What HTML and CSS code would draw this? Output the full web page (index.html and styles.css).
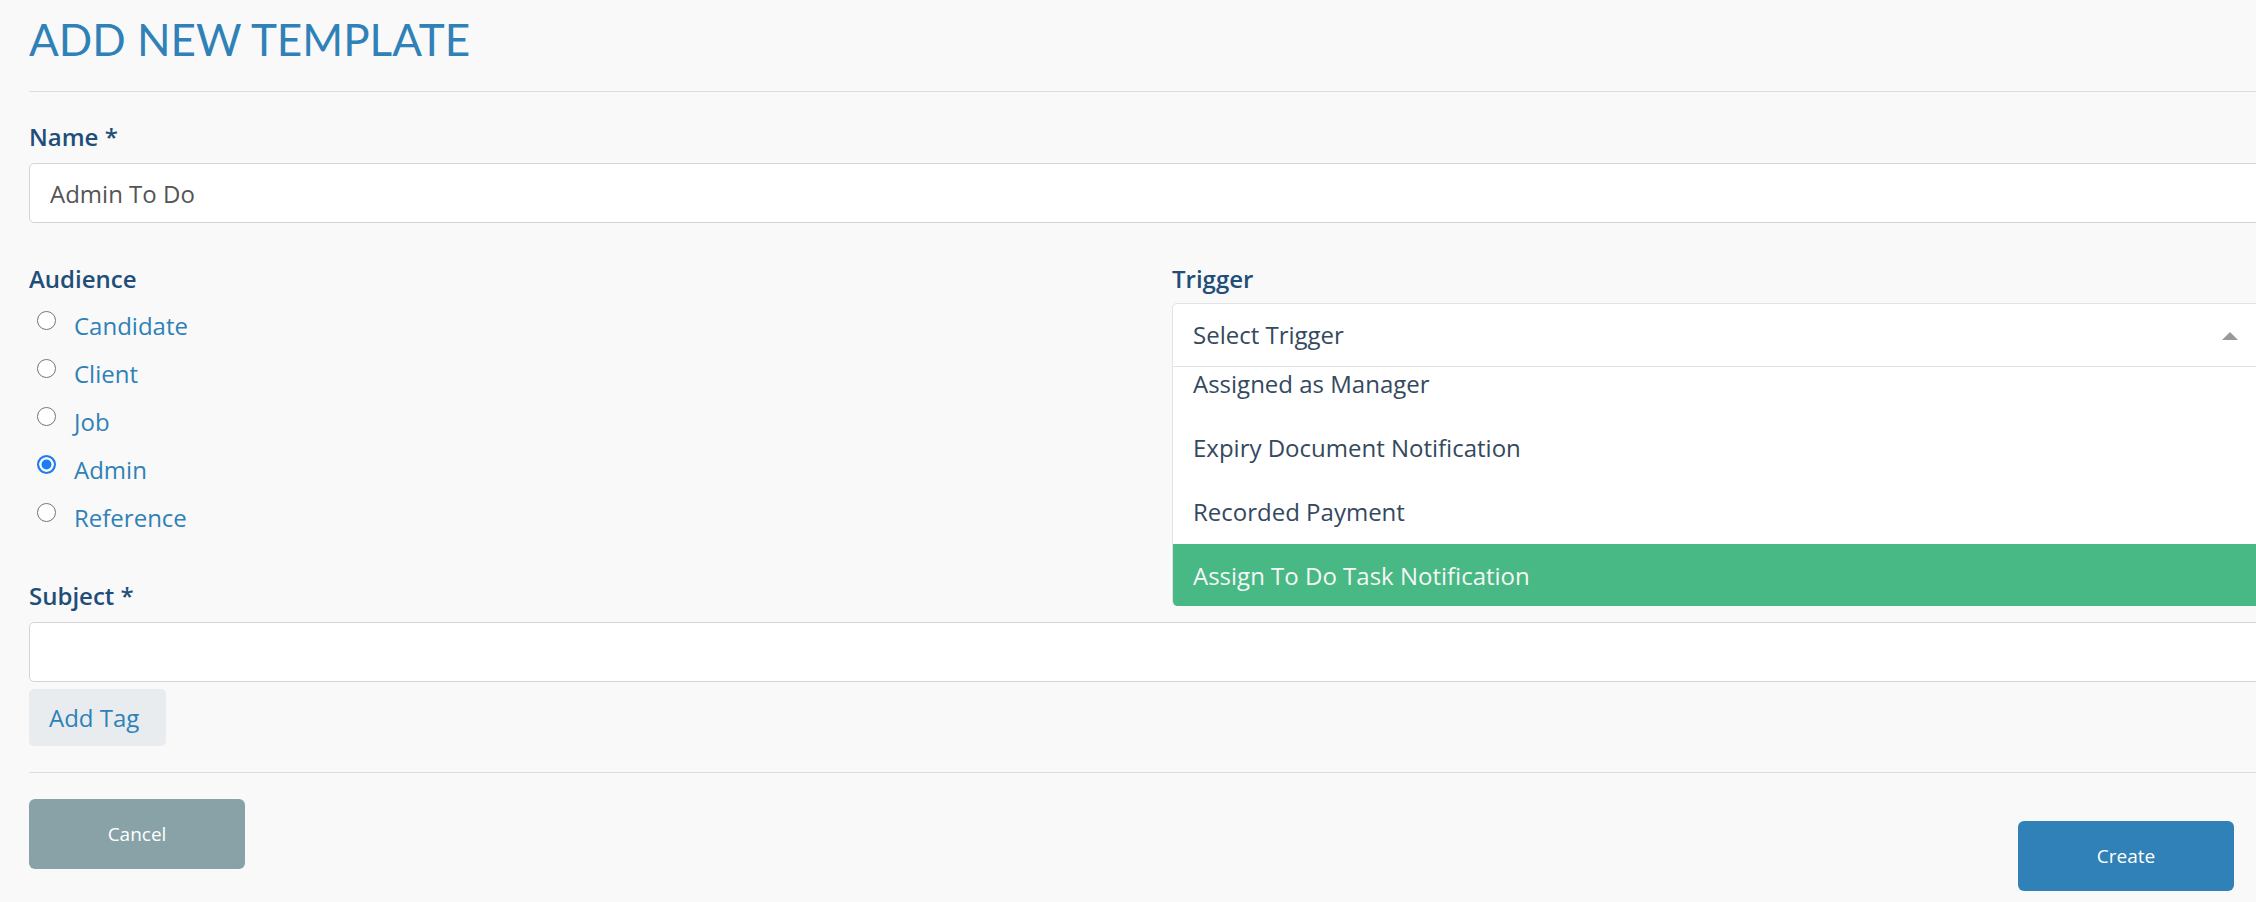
FILE: index.html
```html
<!DOCTYPE html>
<html lang="en">
<head>
  <meta charset="UTF-8" />
  <meta name="viewport" content="width=device-width, initial-scale=1.0"/>
  <title>Add New Template</title>
  <link rel="stylesheet" href="styles.css">
</head>

<body>
  <div class="page">
    <h1 class="page-title">ADD NEW TEMPLATE</h1>
    <div class="divider divider-top"></div>

    <div class="field">
      <label class="field-label" for="name">Name *</label>
      <input class="text-input" id="name" type="text" value="Admin To Do">
    </div>

    <div class="form-row">
      <div class="form-col">
        <div class="field-label">Audience</div>
        <div class="radio-list">
          <label class="radio-item"><input type="radio" name="audience"><span>Candidate</span></label>
          <label class="radio-item"><input type="radio" name="audience"><span>Client</span></label>
          <label class="radio-item"><input type="radio" name="audience"><span>Job</span></label>
          <label class="radio-item"><input type="radio" name="audience" checked><span>Admin</span></label>
          <label class="radio-item"><input type="radio" name="audience"><span>Reference</span></label>
        </div>
      </div>
      <div class="form-col">
        <div class="field-label">Trigger</div>
        <div class="select open">
          <div class="select-head">
            <span>Select Trigger</span>
            <span class="select-arrow"></span>
          </div>
          <div class="select-menu">
            <ul class="select-options">
              <li>Assigned as Manager</li>
              <li>Expiry Document Notification</li>
              <li>Recorded Payment</li>
              <li class="active">Assign To Do Task Notification</li>
            </ul>
          </div>
        </div>
      </div>
    </div>

    <div class="field field-subject">
      <label class="field-label" for="subject">Subject *</label>
      <input class="text-input" id="subject" type="text">
      <button class="btn-tag" type="button">Add Tag</button>
    </div>

    <div class="divider divider-bottom"></div>

    <div class="form-footer">
      <button class="btn btn-cancel" type="button">Cancel</button>
      <button class="btn btn-create" type="button">Create</button>
    </div>
  </div>
</body>
</html>
```

FILE: styles.css
```css
:root {
  --page-background: #f9f9f9;
  --primary: #2f81b7;
  --label-color: #1f4e79;
  --text-color: #34495e;
  --input-border: #d4d4d9;
  --menu-border: #e3e3e3;
  --active-option: #48b884;
  --radio-checked: #1b7cf3;
}
html,
body {
  overflow: hidden;
}
body {
  margin: 0;
  background-color: var(--page-background);
  font-family: "Open Sans", "Noto Sans", "Liberation Sans", sans-serif;
  color: var(--text-color);
}
.page {
  width: 2256px;
  padding-left: 29px;
}
.page-title {
  margin: 13px 0 0;
  font-family: Lato, "Open Sans", sans-serif;
  font-size: 44px;
  line-height: 1.2;
  font-weight: 400;
  color: var(--primary);
}
.divider {
  border-top: 1px solid #dcdcdc;
}
.divider-top {
  margin-top: 25px;
}
.field {
  margin-top: 32px;
}
.field-label {
  display: block;
  font-size: 24px;
  line-height: 26.5px;
  font-weight: 600;
  color: var(--label-color);
  margin-bottom: 13px;
}
.text-input {
  display: block;
  box-sizing: border-box;
  width: 100%;
  height: 60px;
  padding: 0 20px;
  border: 1px solid var(--input-border);
  border-radius: 5px;
  background: #ffffff;
  font-family: inherit;
  font-size: 24px;
  color: #555555;
  outline: none;
}
.form-row {
  display: grid;
  grid-template-columns: 1fr 1fr;
  column-gap: 30px;
  align-items: start;
  margin-top: 43px;
}
.form-col .field-label {
  margin-bottom: 4px;
}
.form-col:last-child .field-label {
  margin-bottom: 10px;
}
.radio-item {
  display: flex;
  align-items: flex-start;
  height: 48px;
  cursor: pointer;
}
.radio-item input {
  appearance: none;
  -webkit-appearance: none;
  box-sizing: border-box;
  width: 19px;
  height: 19px;
  margin: 14px 18px 0 8px;
  border: 1.5px solid #767676;
  border-radius: 50%;
  background: #ffffff;
}
.radio-item input:checked {
  border: 2px solid var(--radio-checked);
  background: var(--radio-checked);
  box-shadow: inset 0 0 0 2.5px #ffffff;
}
.radio-item span {
  padding-top: 10px;
  font-size: 24px;
  line-height: 38px;
  color: var(--primary);
}
.select {
  position: relative;
}
.select-head {
  display: flex;
  align-items: center;
  justify-content: space-between;
  box-sizing: border-box;
  height: 64px;
  padding: 0 46px 0 20px;
  background: #ffffff;
  border: 1px solid var(--menu-border);
  border-radius: 5px 5px 0 0;
  font-size: 24px;
  color: var(--text-color);
}
.select-arrow {
  width: 0;
  height: 0;
  border-left: 8px solid transparent;
  border-right: 8px solid transparent;
  border-bottom: 8px solid #999999;
  margin-top: 3px;
}
.select-menu {
  position: absolute;
  top: 100%;
  left: 0;
  right: 0;
  height: 239px;
  overflow: hidden;
  background: #ffffff;
  border-left: 1px solid var(--menu-border);
  border-radius: 0 0 5px 5px;
  z-index: 2;
}
.select-options {
  list-style: none;
  margin: -15px 0 0;
  padding: 0;
}
.select-options li {
  height: 64px;
  padding-left: 20px;
  font-size: 24px;
  line-height: 64px;
  color: var(--text-color);
}
.select-options li.active {
  background: var(--active-option);
  color: #f4f7f6;
}
.field-subject {
  margin-top: 46px;
}
.btn-tag {
  display: block;
  margin-top: 7px;
  min-width: 137px;
  height: 57px;
  padding: 0 20px;
  border: none;
  border-radius: 5px;
  background: #e8ecef;
  font-family: inherit;
  font-size: 24px;
  text-align: left;
  color: var(--primary);
}
.divider-bottom {
  margin-top: 26px;
}
.form-footer {
  display: flex;
  justify-content: space-between;
  align-items: flex-start;
  padding: 26px 51px 0 0;
}
.btn {
  height: 70px;
  border: none;
  border-radius: 6px;
  font-family: inherit;
  font-size: 19px;
  color: #ffffff;
}
.btn-cancel {
  width: 216px;
  background: #88a2a8;
}
.btn-create {
  width: 216px;
  margin-top: 22px;
  background: var(--primary);
}
```
